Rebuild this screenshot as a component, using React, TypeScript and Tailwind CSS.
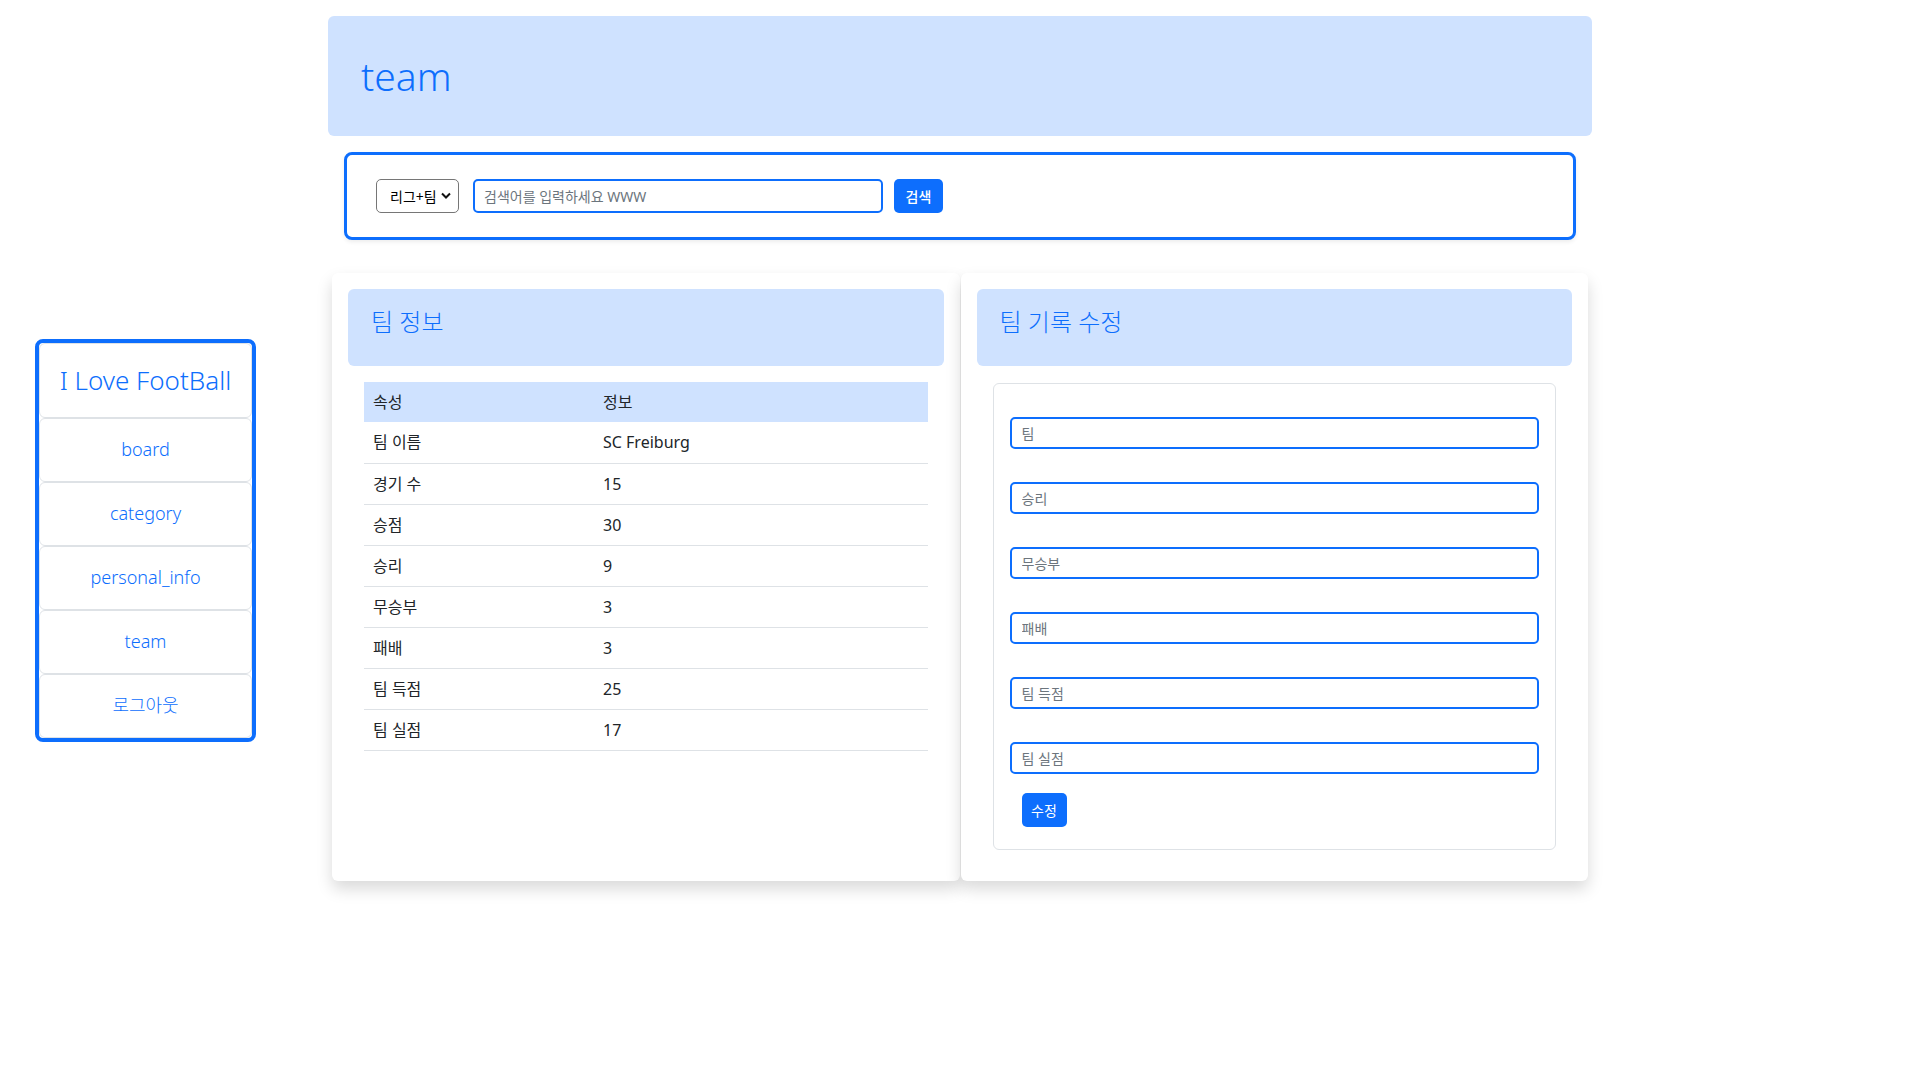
import React from 'react';

interface StatRow {
  label: string;
  value: string;
}

const navItems: string[] = ['board', 'category', 'personal_info', 'team', '로그아웃'];

const stats: StatRow[] = [
  { label: '팀 이름', value: 'SC Freiburg' },
  { label: '경기 수', value: '15' },
  { label: '승점', value: '30' },
  { label: '승리', value: '9' },
  { label: '무승부', value: '3' },
  { label: '패배', value: '3' },
  { label: '팀 득점', value: '25' },
  { label: '팀 실점', value: '17' },
];

const editFields: string[] = ['팀', '승리', '무승부', '패배', '팀 득점', '팀 실점'];

const Sidebar: React.FC = () => {
  return (
    <div className="w-[221px] border-4 border-[#0d6efd] rounded-lg bg-white overflow-hidden">
      <div className="h-[75px] flex items-center justify-center border border-[#dee2e6] rounded-md text-[26px] font-light text-[#0d6efd]">
        I Love FootBall
      </div>
      {navItems.map(item => (
        <a
          key={item}
          href="#"
          className="h-[64px] flex items-center justify-center border border-[#dee2e6] rounded-md text-[18px] font-light text-[#0d6efd]"
        >
          {item}
        </a>
      ))}
    </div>
  );
};

const SearchBar: React.FC = () => {
  return (
    <div className="mx-4 mt-4 border-[3px] border-[#0d6efd] rounded-lg bg-white px-[29px] py-[24px] shadow-[0_2px_4px_rgba(0,0,0,0.075)]">
      <div className="flex items-center">
        <div className="relative w-[83px] h-[34px]">
          <select className="appearance-none w-full h-full border border-[#767676] rounded-[5px] bg-white pl-[13px] text-[14px] text-black outline-none">
            <option>리그+팀</option>
          </select>
          <svg
            className="absolute right-[8px] top-[13px] pointer-events-none"
            width="10"
            height="8"
            viewBox="0 0 10 8"
          >
            <path d="M1 1.5 L5 5.5 L9 1.5" fill="none" stroke="#111" strokeWidth="2" />
          </svg>
        </div>
        <input
          className="ml-[14px] w-[410px] h-[34px] border-2 border-[#0d6efd] rounded-[5px] px-[9px] text-[14px] outline-none placeholder:text-[#6c757d]"
          placeholder="검색어를 입력하세요 WWW"
        />
        <button className="ml-[11px] w-[49px] h-[34px] rounded-[5px] bg-[#0d6efd] text-white text-[14px] font-medium">
          검색
        </button>
      </div>
    </div>
  );
};

const PanelTitle: React.FC<{ title: string }> = ({ title }) => (
  <div className="h-[77px] rounded-md bg-[#cfe2ff] px-[23px] pt-[19px]">
    <h3 className="text-[24px] leading-[1.2] font-light text-[#0d6efd]">{title}</h3>
  </div>
);

const TeamInfo: React.FC = () => {
  return (
    <div className="bg-white rounded-md shadow-[0_8px_16px_rgba(0,0,0,0.15)] p-4">
      <PanelTitle title="팀 정보" />
      <div className="px-4 mt-4">
        <table className="w-full text-[16px] text-[#212529] border-collapse">
          <thead>
            <tr className="bg-[#cfe2ff] h-[40px]">
              <th className="w-[231px] text-left font-normal px-[9px]">속성</th>
              <th className="text-left font-normal px-[8px]">정보</th>
            </tr>
          </thead>
          <tbody>
            {stats.map(row => (
              <tr key={row.label} className="h-[41px] border-b border-[#dee2e6]">
                <td className="px-[9px]">{row.label}</td>
                <td className="px-[8px]">{row.value}</td>
              </tr>
            ))}
          </tbody>
        </table>
      </div>
    </div>
  );
};

const TeamEdit: React.FC = () => {
  return (
    <div className="bg-white rounded-md shadow-[0_8px_16px_rgba(0,0,0,0.15)] p-4">
      <PanelTitle title="팀 기록 수정" />
      <div className="px-4 mt-[17px] mb-[15px]">
        <div className="border border-[#dee2e6] rounded-md px-4 pt-[33px] pb-[22px]">
          <div className="flex flex-col gap-[33px]">
            {editFields.map(field => (
              <input
                key={field}
                className="w-full h-[32px] border-2 border-[#0d6efd] rounded-[5px] px-[10px] text-[14px] outline-none placeholder:text-[#6c757d]"
                placeholder={field}
              />
            ))}
          </div>
          <button className="mt-[19px] ml-[12px] w-[45px] h-[34px] rounded-[5px] bg-[#0d6efd] text-white text-[14px]">
            수정
          </button>
        </div>
      </div>
    </div>
  );
};

export default function App() {
  return (
    <div
      className="min-h-screen bg-white grid grid-cols-[1fr_1264px_1fr]"
      style={{ fontFamily: '"Noto Sans", "Noto Sans CJK KR", sans-serif' }}
    >
      <div className="h-screen flex items-center pl-[35px]">
        <Sidebar />
      </div>

      <main className="pt-4 pb-12">
        <div className="h-[120px] rounded-md bg-[#cfe2ff] flex items-center px-[33px]">
          <h1 className="text-[39px] leading-[1.2] font-light text-[#0d6efd]">team</h1>
        </div>

        <SearchBar />

        <div className="mx-1 mt-[33px] grid grid-cols-2 gap-px">
          <TeamInfo />
          <TeamEdit />
        </div>
      </main>

      <div />
    </div>
  );
}
